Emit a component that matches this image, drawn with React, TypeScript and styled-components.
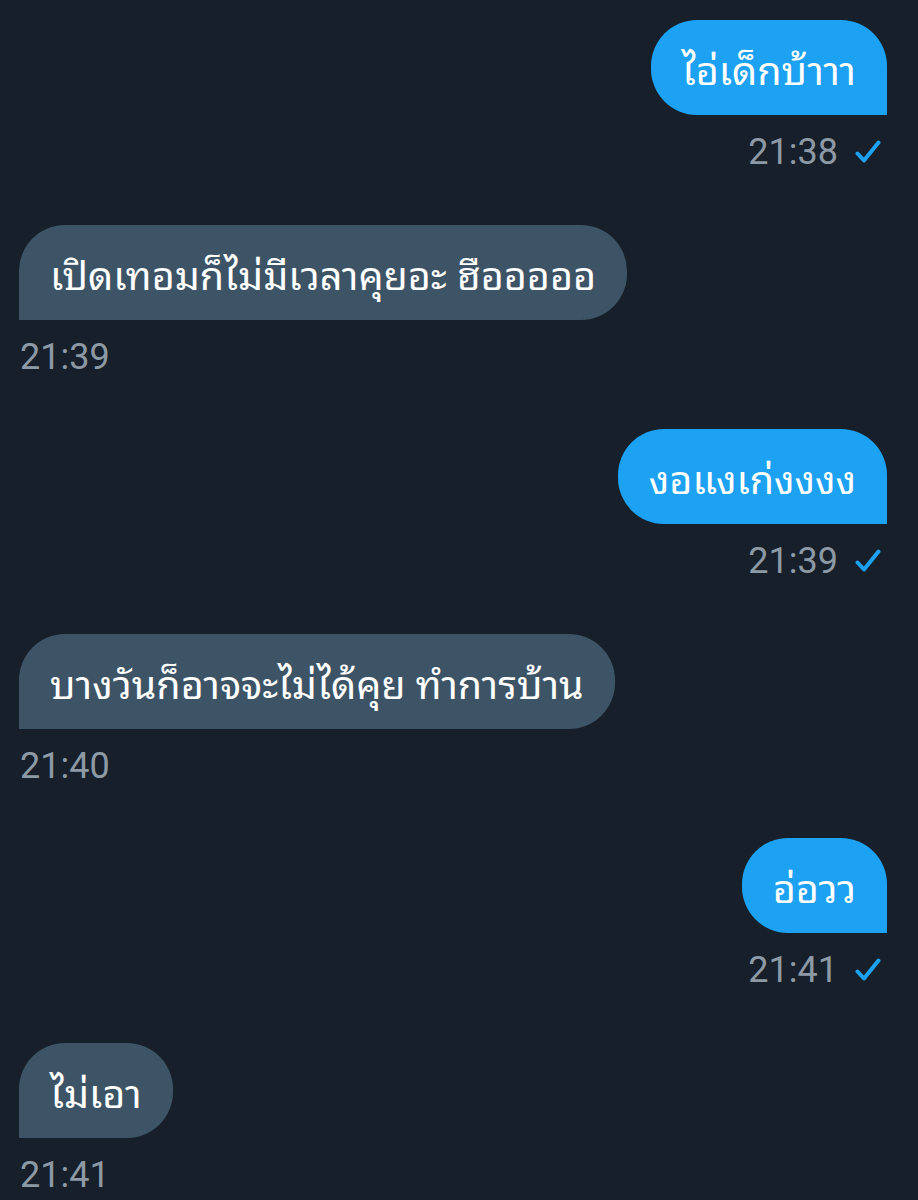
import React from "react";
import styled, { createGlobalStyle } from "styled-components";

const Global = createGlobalStyle`
  html, body { margin: 0; padding: 0; background: #17202a; }
  body { font-family: Roboto, "Noto Sans Thai", "Noto Sans", sans-serif; }
`;

const Page = styled.div`
  width: 918px;
  height: 1200px;
  background: #17202a;
  box-sizing: border-box;
  padding: 20px 31px 0 19px;
  display: flex;
  flex-direction: column;
  overflow: hidden;
`;

const Group = styled.div<{ $sent: boolean }>`
  display: flex;
  flex-direction: column;
  align-items: ${(p) => (p.$sent ? "flex-end" : "flex-start")};
  height: 204.6px;
  flex-shrink: 0;
`;

const Bubble = styled.div<{ $sent: boolean }>`
  height: 95px;
  box-sizing: border-box;
  padding: 0 31px;
  display: flex;
  align-items: center;
  color: #ffffff;
  font-family: "Noto Sans Thai Looped", Loma, Waree, Garuda, "Noto Sans Thai", sans-serif;
  font-size: 39.5px;
  white-space: nowrap;
  background: ${(p) => (p.$sent ? "#1da1f2" : "#3d5466")};
  border-radius: ${(p) => (p.$sent ? "46px 46px 0 46px" : "46px 46px 46px 0")};
`;

const Meta = styled.div<{ $sent: boolean }>`
  display: flex;
  align-items: center;
  gap: 17px;
  margin-top: 16px;
  padding-right: ${(p) => (p.$sent ? "6px" : "0")};
  padding-left: ${(p) => (p.$sent ? "0" : "1px")};
  color: #8d9aa6;
  font-family: Roboto, sans-serif;
  font-size: 36px;
  line-height: 42px;
`;

const Check = () => (
  <svg width="26" height="24" viewBox="0 0 26 24" fill="none">
    <path d="M2.5 13.5 L9 20.5 L23.5 2.5" stroke="#1da1f2" strokeWidth="4" strokeLinecap="round" strokeLinejoin="round" />
  </svg>
);

const messages = [
  { sent: true, text: "ไอ่เด็กบ้าาา", time: "21:38" },
  { sent: false, text: "เปิดเทอมก็ไม่มีเวลาคุยอะ ฮือออออ", time: "21:39" },
  { sent: true, text: "งอแงเก่งงงง", time: "21:39" },
  { sent: false, text: "บางวันก็อาจจะไม่ได้คุย ทำการบ้าน", time: "21:40" },
  { sent: true, text: "อ่อวว", time: "21:41" },
  { sent: false, text: "ไม่เอา", time: "21:41" },
];

export default function App() {
  return (
    <>
      <Global />
      <Page>
        {messages.map((m, i) => (
          <Group key={i} $sent={m.sent}>
            <Bubble $sent={m.sent}>{m.text}</Bubble>
            <Meta $sent={m.sent}>
              <span>{m.time}</span>
              {m.sent && <Check />}
            </Meta>
          </Group>
        ))}
      </Page>
    </>
  );
}
